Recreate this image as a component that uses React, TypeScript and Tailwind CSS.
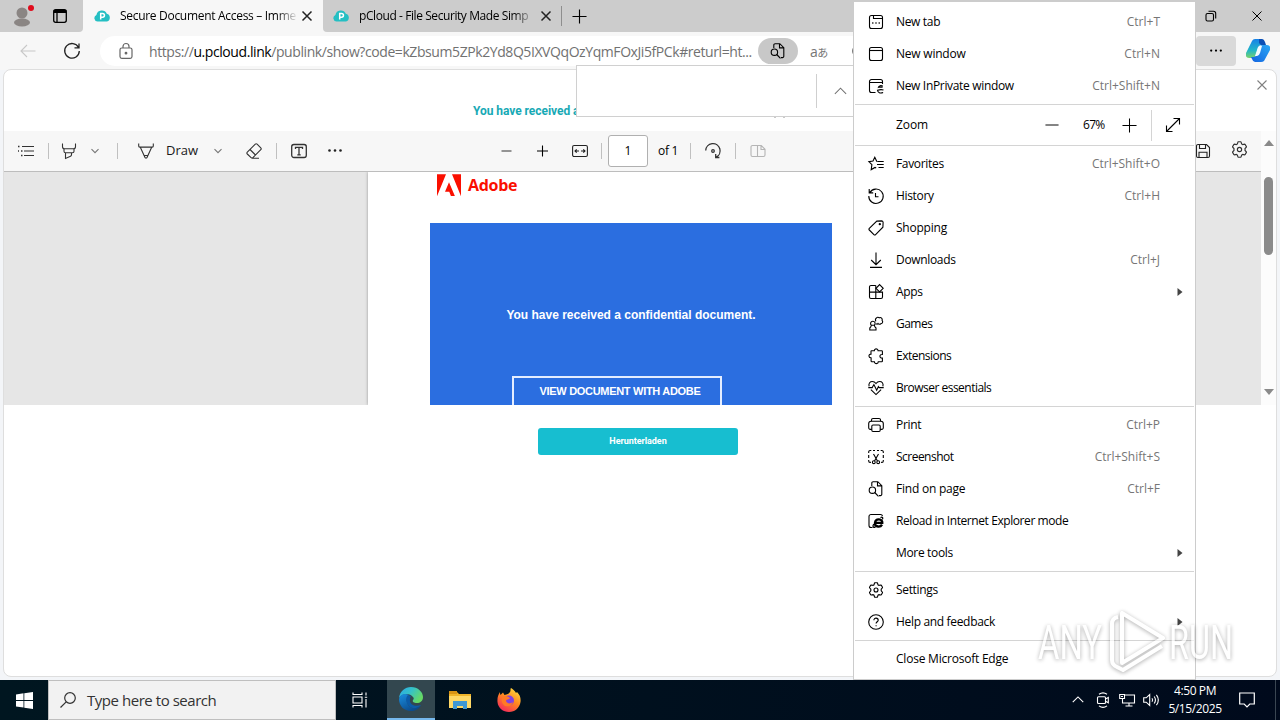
import type { ReactNode } from "react";

const icons: Record<string, ReactNode> = {
  newTab: (
    <>
      <rect x="1.5" y="1.5" width="13" height="13" rx="2" />
      <path d="M5.5 1.5v3h9" />
      <path d="M4.2 9h1.2M7.4 9h1.2M10.6 9h1.2" strokeWidth="1.4" />
    </>
  ),
  newWindow: (
    <>
      <rect x="1.5" y="1.5" width="13" height="13" rx="2" />
      <path d="M1.5 4.5h13" />
    </>
  ),
  inPrivate: (
    <>
      <path d="M7.5 14.5h-4a2 2 0 0 1-2-2v-9a2 2 0 0 1 2-2h9a2 2 0 0 1 2 2v2.5M1.5 4.5h13" />
      <path d="M14.8 8.3c-1.6-1.2-4-.8-4.4 1 1.3-.6 2.4.2 4.2-.1M15.5 12c-2.2-.7-4-.4-6 .2.3 2.4 2.8 3.6 5.6 2.3" />
    </>
  ),
  favorites: (
    <>
      <path d="M9.8 5.5 8.7 5.200 6.800 1.2 5 5 .9 5.6l3 3-.7 5 3.800-2.200 1.200.7" />
      <path d="M10 5.5h5.7M9 8.500h6.700M10.500 11.500h5.200" />
    </>
  ),
  history: (
    <>
      <path d="M1.800 4.600A7.200 7.200 0 1 1 .8 8M1.200 1v3.900h4" />
      <path d="M7.500 5v3.700h3" />
    </>
  ),
  shopping: (
    <>
      <path d="M8.8 1.1 13.6.9a1.5 1.5 0 0 1 1.5 1.5l-.2 4.8L7.6 14.6a1.2 1.2 0 0 1-1.7 0L1.3 10a1.2 1.2 0 0 1 0-1.7Z" />
      <circle cx="11.8" cy="4.2" r=".6" fill="currentColor" />
    </>
  ),
  downloads: <path d="M8 .5v12M3.2 8 8 12.7 12.8 8M2 15.4h12" />,
  apps: (
    <>
      <path d="M7.8 1.5H3a1.5 1.5 0 0 0-1.5 1.5v10A1.5 1.5 0 0 0 3 14.5h10a1.5 1.5 0 0 0 1.5-1.5V8.1h-13M7.8 1.5v13" />
      <path d="m11.6.6 3.6 3.7-3.6 3.6L8 4.3Z" fill="white" />
    </>
  ),
  games: (
    <>
      <path d="M4.8 5.2a2.3 2.3 0 0 1 1.6 4c.1 1.3.6 2 1.6 2.8v2H1.8v-2c1-.8 1.4-1.5 1.5-2.8a2.3 2.3 0 0 1 1.5-4ZM3 9.2h3.6" />
      <path d="M8 5.3a2 2 0 0 1 .2-3 2 2 0 0 1 3.1-.5 2 2 0 0 1 2.8 2.5 2 2 0 0 1-1.2 3.4c-1 .8-2.3.7-2.9-.2-.6.9-1.3.7-2 .3" />
    </>
  ),
  extensions: (
    <path d="M3.500 2.800h2.800c0-2.600 3.800-2.600 3.800 0h3.600a.7.7 0 0 1 .7.700v3c-3.300-.4-3.300 3.900 0 3.600v3a.7.7 0 0 1-.7.700h-3.400c0 2.400-3.900 2.400-3.900 0H3.900a.8.8 0 0 1-.8-.8V9.900C.2 9.600.3 6.100 3 6.100V3.300c0-.3.2-.5.5-.5Z" />
  ),
  essentials: (
    <>
      <path d="M1.1 6.3C.3 3.2 2.2 1.5 4.3 1.5c1.7 0 2.8.8 3.7 2 .9-1.2 2-2 3.7-2 2.1 0 4 1.7 3.2 4.8M2.9 9.6 8 14.6l5.1-5" />
      <path d="M.3 7.6h3.9l1.7-3 2.8 5.6 1.7-3.6.8 1h4.5" />
    </>
  ),
  print: (
    <>
      <path d="M3.8 12.4H2.3A1.6 1.6 0 0 1 .7 10.8V6.6a2.4 2.4 0 0 1 2.4-2.4h9.8a2.4 2.4 0 0 1 2.4 2.4v4.2a1.6 1.6 0 0 1-1.6 1.6h-1.5" />
      <path d="M3.5 4.2V3a1.5 1.5 0 0 1 1.5-1.5h6A1.5 1.5 0 0 1 12.5 3v1.2" />
      <rect x="3.8" y="8" width="8.4" height="6.5" rx="1.2" />
    </>
  ),
  screenshot: (
    <>
      <path d="M.7 4V2.900A1.400 1.400 0 0 1 2.100 1.500H3.300M5 1.500h2M9 1.500h2M12.700 1.500h1.200a1.400 1.400 0 0 1 1.400 1.400V4M15.300 6v3M15.300 11v1a1.400 1.400 0 0 1-1.400 1.400h-.8M.7 6v3M.7 11v1a1.400 1.400 0 0 0 1.400 1.400h.8" />
      <path d="m5.5 5 4 7M10.5 5l-4 7" />
      <circle cx="5.8" cy="13.2" r="1.4" />
      <circle cx="10.2" cy="13.2" r="1.4" />
    </>
  ),
  find: (
    <>
      <path d="M3.8 5V2a1.3 1.3 0 0 1 1.3-1.3h4.7l4 4v8.6a1.3 1.3 0 0 1-1.3 1.3H11M9.5.9v4h4.2" />
      <circle cx="4.4" cy="9.2" r="3.2" />
      <path d="m6.7 11.5 3.8 3.9" />
    </>
  ),
  ie: (
    <>
      <path d="M4.500 14.500H3a2 2 0 0 1-2-2v-9a2 2 0 0 1 2-2h9.500a2 2 0 0 1 2 1.500" />
      <path d="M14 11.600c-.8 1.500-2.300 2.100-4 1.900-2-.2-3.200-1.600-3-3.700.2-2.200 1.700-3.600 4-3.500 2.300.1 3.500 1.700 3.300 3.600H7.500" strokeWidth="2.300" />
      <path d="M12.500 4.600c1.800-.9 2.900-.2 1.900 1.800M5.700 11c-1.300 2.400-.8 4.100 1.800 2.800" strokeWidth="1.300" />
    </>
  ),
  gear: (
    <>
      <path d="m6.5 1.1.3-.4h2.4l.3.4.5 1.700 1 .6 1.800-.4.5.2 1.200 2.100-.1.5L13.200 7.100v1.800l1.200 1.300.1.5-1.200 2.100-.5.2-1.800-.4-1 .6-.5 1.700-.3.4H6.800l-.3-.4L6 13.200l-1-.6-1.800.4-.5-.2-1.200-2.100.1-.5 1.200-1.300V7.100L1.600 5.800l-.1-.5 1.200-2.100.5-.2 1.800.4 1-.6Z" />
      <circle cx="8" cy="8" r="2" />
    </>
  ),
  help: (
    <>
      <circle cx="8" cy="8" r="7.3" />
      <path d="M5.9 6.200c0-2.900 4.300-2.700 4.300 0 0 1.500-2.100 1.700-2.100 3.400M8.100 11.200v1" />
    </>
  ),
  minus: <path d="M.5 8h15" />,
  plus: <path d="M8 .5v15M.5 8h15" />,
  smallMinus: <path d="M3.5 8h10" />,
  smallPlus: <path d="M8.500 2.500v11M3 8h11" />,
  expand: <path d="M1.5 14.5 14.5 1.5M8.5 1.5h6v6M1.5 8.5v6h6" />,
  close: <path d="m3.5 3.500 9 9M12.500 3.500l-9 9" />,
  up: <path d="m2 10.500 6-6 6 6" />,
  down: <path d="m4.500 6.200 3.500 3.500 3.500-3.500" />,
  restore: (
    <>
      <rect x="3" y="5.5" width="7.5" height="7.5" rx="1.5" />
      <path d="M5.5 3.3h5a2.200 2.200 0 0 1 2.200 2.200v5" />
    </>
  ),
  dots: (
    <g fill="currentColor" stroke="none">
      <circle cx="2.500" cy="7.500" r="1.300" />
      <circle cx="8" cy="7.500" r="1.300" />
      <circle cx="13.500" cy="7.500" r="1.300" />
    </g>
  ),
  back: <path d="M15.5 8H1M7 2 1 8l6 6" />,
  reload: <path d="M14.5 4.5A7.300 7.300 0 1 0 15.300 8M15 .5v4.300h-4.500" />,
  lock: (
    <>
      <rect x="2" y="5" width="12" height="10.3" rx="1.8" />
      <path d="M5 5V3.500a3 3 0 0 1 6 0V5" />
      <circle cx="8" cy="10.2" r=".8" fill="currentColor" />
    </>
  ),
  tabs: (
    <>
      <rect x="1.7" y="1.7" width="12.6" height="12.6" rx="2" />
      <path d="M1.7 3.5h12.6" strokeWidth="3" />
      <path d="M5 3v11" />
    </>
  ),
  list: (
    <>
      <path d="M4 3.5h12M6 8h10M6 12.5h10" />
      <path d="M0 3.500h1.500M3 8h1.500M3 12.500h1.500M0 8h1" strokeWidth="1.5" />
    </>
  ),
  highlighter: <path d="M1.500.5v3.200a2 2 0 0 0 2 2h9a2 2 0 0 0 2-2V.5M3 5.700v2.500a1.500 1.500 0 0 0 1.500 1.500h7A1.500 1.500 0 0 0 13 8.200V5.700M4.500 9.700v5.800l5-2.300a1.500 1.500 0 0 0 1-1.400V9.700" />,
  pen: <path d="M.7.5v2.600a1 1 0 0 0 1 1h12.600a1 1 0 0 0 1-1V.5M2.200 4.100l4.800 10.300a1.100 1.100 0 0 0 2 0l4.800-10.300M6 12.500h4" />,
  eraser: <path d="m1.300 9.200 8-8a1.300 1.300 0 0 1 1.800 0l3.700 3.700a1.300 1.300 0 0 1 0 1.800l-7.900 7.900a1.300 1.300 0 0 1-1.800 0L1.300 11a1.300 1.300 0 0 1 0-1.800ZM4 6.500l5.500 5.500M6 15.300h7" />,
  text: (
    <>
      <rect x=".7" y="1.500" width="14.6" height="13" rx="2.2" />
      <path d="M4.500 6V4.300h7V6M8 4.300v7.500M6.300 11.800h3.400" />
    </>
  ),
  fit: (
    <>
      <rect x=".6" y="2.500" width="14.800" height="11" rx="1.500" />
      <path d="M7 8H3M4.700 6.300 3 8l1.700 1.700M9 8h4M11.300 6.300 13 8l-1.700 1.700" />
    </>
  ),
  rotate: (
    <>
      <path d="M.7 7.500A7.200 7.200 0 1 1 11 14.300M10.700 10.900v3.600h3.700" />
      <circle cx="8" cy="8" r="1.300" />
    </>
  ),
  pageView: <path d="M7.500 13.500h-5a1.500 1.500 0 0 1-1.500-1.500V4a1.500 1.500 0 0 1 1.500-1.500h5ZM7.500 2.500h3.800L15 6.300V12a1.500 1.500 0 0 1-1.500 1.500h-6M11 2.700v3.800h4" />,
  save: <path d="M3 1.500h8.500l3 3V13a1.500 1.500 0 0 1-1.500 1.500H3A1.500 1.500 0 0 1 1.500 13V3A1.500 1.500 0 0 1 3 1.500ZM4.500 1.700v3.800h6V1.700M4 14.400V9.300h8v5.100" />,
  search: (
    <>
      <circle cx="10" cy="6" r="5.300" />
      <path d="M6.200 9.800.5 15.500" />
    </>
  ),
  taskView: <path d="M1 .5v2h9v-2M1 15.500v-2h9v2M1 5h9v6H1ZM14 .5v3M14 7v8.500M12.800 5.200h2.400" />,
  camera: (
    <>
      <rect x="2.500" y="4.800" width="8" height="6.700" rx="1" />
      <path d="m10.500 7 2.800-1.500v5.300L10.500 9.300M4 2.300c2.500-1.800 5.500-1.800 8 0M4 13.900c2.500 1.800 5.500 1.800 8 0" />
    </>
  ),
  network: <path d="M5.500 3h10v8H3.500V6.500M.7 2.500h4.800v4H.7ZM2 4.500h2M10 11v3M6.500 14h7" />,
  sound: <path d="M.7 5.800h2.500l3.500-3.200v10.800l-3.500-3.200H.7ZM9 6.200c.8 1.100.8 2.500 0 3.600M11.200 4.500c1.500 2.100 1.500 4.900 0 7M13.400 2.800c2.300 3.100 2.300 7.300 0 10.400" />,
  notice: <path d="M.7 1h14.600v11h-4.500L8 14.800 5.200 12H.7Z" />,
};

function Icon({ name, className = "size-4", width = 1.1 }: { name: string; className?: string; width?: number }) {
  return (
    <svg viewBox="0 0 16 16" fill="none" stroke="currentColor" strokeWidth={width} className={`shrink-0 overflow-visible ${className}`}>
      {icons[name]}
    </svg>
  );
}

function PCloud() {
  return (
    <svg viewBox="0 0 16 12" className="h-3 w-4 shrink-0">
      <path d="M3.5 11.500A3.400 3.400 0 0 1 2.400 5 5.500 5.500 0 0 1 12.800 3.800a4 4 0 0 1 .2 7.700Z" fill="#25bfc3" />
      <path d="M6.700 9.500V3.500h1.900a1.800 1.800 0 0 1 0 3.700H6.700" fill="none" stroke="white" strokeWidth="1.500" />
    </svg>
  );
}

type Item = { label: string; icon?: string; keys?: string; sub?: boolean; tracking?: string };

const loose = "tracking-[-0.22px]";
const tight = "tracking-[-0.52px]";

const topItems: Item[] = [
  { label: "New tab", icon: "newTab", keys: "Ctrl+T" },
  { label: "New window", icon: "newWindow", keys: "Ctrl+N", tracking: loose },
  { label: "New InPrivate window", icon: "inPrivate", keys: "Ctrl+Shift+N" },
];

const groups: Item[][] = [
  [
    { label: "Favorites", icon: "favorites", keys: "Ctrl+Shift+O" },
    { label: "History", icon: "history", keys: "Ctrl+H" },
    { label: "Shopping", icon: "shopping", tracking: loose },
    { label: "Downloads", icon: "downloads", keys: "Ctrl+J" },
    { label: "Apps", icon: "apps", sub: true },
    { label: "Games", icon: "games", tracking: tight },
    { label: "Extensions", icon: "extensions", tracking: tight },
    { label: "Browser essentials", icon: "essentials", tracking: tight },
  ],
  [
    { label: "Print", icon: "print", keys: "Ctrl+P" },
    { label: "Screenshot", icon: "screenshot", keys: "Ctrl+Shift+S", tracking: tight },
    { label: "Find on page", icon: "find", keys: "Ctrl+F", tracking: loose },
    { label: "Reload in Internet Explorer mode", icon: "ie", tracking: "tracking-[-0.42px]" },
    { label: "More tools", sub: true },
  ],
  [
    { label: "Settings", icon: "gear" },
    { label: "Help and feedback", icon: "help", sub: true },
  ],
  [{ label: "Close Microsoft Edge", tracking: loose }],
];

function MenuRow({ item }: { item: Item }) {
  return (
    <div className="flex h-8 items-center pl-3.5 pr-3">
      <span className="flex w-4">{item.icon && <Icon name={item.icon} />}</span>
      <span className={`ml-3 flex-1 ${item.tracking ?? "tracking-[-0.33px]"}`}>{item.label}</span>
      {item.keys && <span className="mr-[23px] text-[#767676]">{item.keys}</span>}
      {item.sub && (
        <svg viewBox="0 0 6 8" className="h-2 w-[6px]">
          <path d="M.5 0v8L5.500 4Z" fill="#444" />
        </svg>
      )}
    </div>
  );
}

const Rule = () => <div className="mx-px my-[2px] h-px bg-[#d4d4d4]" />;

function BrowserMenu() {
  return (
    <div className="absolute left-[853px] top-px w-[343px] border border-[#cccccc] bg-white py-1 text-[12px] text-black">
      {topItems.map((item) => (
        <MenuRow key={item.label} item={item} />
      ))}
      <Rule />
      <div className="flex h-9 items-center pl-[42px]">
        <span className="w-[149px] tracking-[-0.1px]">Zoom</span>
        <Icon name="minus" className="size-[14px]" />
        <span className="ml-[24px] w-[24px] whitespace-nowrap tracking-[-0.7px]">67%</span>
        <Icon name="plus" className="ml-[15px] size-[15px]" />
        <span className="ml-[14px] h-[31px] w-px bg-[#d4d4d4]" />
        <Icon name="expand" className="ml-[13px] size-4" />
      </div>
      {groups.map((group, i) => (
        <div key={i}>
          <Rule />
          {group.map((item) => (
            <MenuRow key={item.label} item={item} />
          ))}
        </div>
      ))}
    </div>
  );
}

function TabStrip() {
  return (
    <div className="flex h-8 bg-[#f7f7f7]">
      <div className="flex w-[83px] items-center rounded-br bg-[#cccccc]">
        <svg viewBox="0 0 22 22" className="ml-[13px] size-[22px]">
          <circle cx="9" cy="8" r="5.5" fill="#8a8583" />
          <ellipse cx="9" cy="17.500" rx="8" ry="4" fill="#8a8583" />
          <circle cx="18" cy="3" r="3" fill="#e00b1c" />
        </svg>
        <Icon name="tabs" className="ml-[17px] size-4 text-black" width={1.3} />
      </div>
      <div className="flex w-[240px] items-center bg-[#f7f7f7] pl-[11px]">
        <PCloud />
        <span className="ml-[10px] w-[178px] whitespace-nowrap text-[12px] tracking-[-0.3px] text-black mask-r-from-88%">
          Secure Document Access – Imme
        </span>
        <Icon name="close" className="ml-px size-4 text-[#222]" width={1.5} />
      </div>
      <div className="flex flex-1 items-center rounded-bl bg-[#cccccc] pl-[10px]">
        <PCloud />
        <span className="ml-[10px] w-[176px] whitespace-nowrap text-[12px] tracking-[-0.42px] text-black mask-r-from-88%">
          pCloud - File Security Made Simp
        </span>
        <Icon name="close" className="ml-[3px] size-4 text-[#222]" width={1.5} />
        <span className="ml-[7px] h-5 w-px bg-[#8e8e8e]" />
        <Icon name="plus" className="ml-[10px] size-[15px] text-black" width={1.2} />
        <Icon name="restore" className="ml-[616px] size-4 text-black" />
        <Icon name="close" className="ml-[30px] size-4 text-black" width={1} />
      </div>
    </div>
  );
}

function AddressRow() {
  return (
    <div className="flex h-[38px] bg-[#f7f7f7] pt-1">
      <Icon name="back" className="ml-5 mt-[7px] size-4 text-[#c8c8c8]" />
      <Icon name="reload" className="ml-7 mt-[7px] size-4 text-[#222]" width={1.3} />
      <div className="ml-5 flex h-[30px] w-[1090px] items-center rounded-full bg-white pl-[18px]">
        <Icon name="lock" className="size-4 text-[#666]" width={1.2} />
        <span className="ml-[15px] w-[609px] whitespace-nowrap text-[14px] tracking-[-0.42px] text-[#717171]">
          https://<span className="text-black">u.pcloud.link</span>
          /publink/show?code=kZbsum5ZPk2Yd8Q5IXVQqOzYqmFOxJi5fPCk#returl=ht...
        </span>
        <span className="flex h-[26px] w-10 shrink-0 items-center justify-center rounded-full bg-[#c8c8c8]">
          <Icon name="find" className="size-4 text-black" />
        </span>
        <span className="ml-3 whitespace-nowrap font-['Open_Sans','Noto_Sans_CJK_JP',sans-serif] text-[14px] tracking-[-0.5px] text-[#767676]">
          a<span className="text-[11px]">あ</span>
        </span>
        <span className="ml-[24px] size-3 shrink-0 rounded-full border border-[#767676]" />
      </div>
      <div className="ml-1.5 flex h-[30px] w-10 items-center justify-center rounded bg-[#d9d9d9]">
        <Icon name="dots" className="size-[14px] text-black" />
      </div>
      <svg viewBox="0 0 24 24" className="ml-[10px] mt-[3px] size-6">
        <defs>
          <linearGradient id="copA" x1="0" y1="0" x2="0" y2="1">
            <stop offset="0" stopColor="#1681e8" />
            <stop offset="0.6" stopColor="#22b7c8" />
            <stop offset="1" stopColor="#7ad36a" />
          </linearGradient>
          <linearGradient id="copB" x1="0" y1="1" x2="1" y2="0">
            <stop offset="0" stopColor="#1464e0" />
            <stop offset="1" stopColor="#2aa7f5" />
          </linearGradient>
        </defs>
        <path d="M6 2Q7 0 9 0h6q2 0 3 3l1 3h-4q-2 0-3 3l-2 7q-1 3-4 3H3q-4 0-3-5Z" fill="url(#copA)" />
        <path d="M13 0h3q2 0 3 3l1 3h-5l-2-2Z" fill="#0c4fb5" />
        <path d="M18 22q-1 1-3 1H9q-2 0-3-3l-1-2h3q2 0 3-3l2-6q1-3 4-3h4q4 0 3 5Z" fill="url(#copB)" />
        <path d="m12 8-3 9h2q2 0 3-3l2-7h-2q-1 0-2 1Z" fill="#f3fbff" />
      </svg>
    </div>
  );
}

const Split = ({ className }: { className: string }) => <span className={`h-4 w-px bg-[#c0c0c0] ${className}`} />;

function PdfToolbar() {
  return (
    <div className="flex h-[41px] items-center border-b border-[#bdbdbd] bg-[#f7f7f7] pb-px text-[12px] text-[#333]">
      <Icon name="list" className="ml-[14px] size-4" />
      <Split className="ml-[14px]" />
      <Icon name="highlighter" className="ml-3 size-4" />
      <Icon name="down" className="ml-[10px] size-4 text-[#777]" />
      <Split className="ml-[14px]" />
      <Icon name="pen" className="ml-5 size-4" />
      <span className="ml-3 w-[33px] text-[13px] text-[#1a1a1a]">Draw</span>
      <Icon name="down" className="ml-[11px] size-4 text-[#777]" />
      <Icon name="eraser" className="ml-5 size-4" />
      <Split className="ml-[14px]" />
      <Icon name="text" className="ml-[14px] size-4" width={1.3} />
      <Icon name="dots" className="ml-5 size-4 text-[#222]" />
      <Icon name="smallMinus" className="ml-[155px] size-4" />
      <Icon name="smallPlus" className="ml-5 size-4 text-black" />
      <Icon name="fit" className="ml-[22px] size-4 text-[#222]" />
      <Split className="ml-[13px]" />
      <span className="ml-1.5 flex h-8 w-10 items-center justify-center rounded-[3px] border border-[#b0b0b0] bg-white text-black">
        1
      </span>
      <span className="ml-[10px] w-5 whitespace-nowrap tracking-[-0.3px] text-black">of 1</span>
      <Split className="ml-3" />
      <Icon name="rotate" className="ml-[14px] size-4" width={1.3} />
      <Split className="ml-[14px]" />
      <Icon name="pageView" className="ml-[14px] size-4 text-[#b5b5b5]" />
      <Icon name="save" className="ml-[429px] size-4 text-[#222]" />
      <Icon name="gear" className="-mt-0.5 ml-5 size-[17px]" width={1.1} />
    </div>
  );
}

function PdfViewer() {
  return (
    <div className="flex h-[274px]">
      <div className="flex w-[1257px] flex-col">
        <PdfToolbar />
        <div className="flex flex-1 overflow-hidden bg-[#e6e6e6] pl-[364px]">
          <div className="w-[526px] bg-white pl-[62px] pt-[2px] shadow-[0_0_3px_rgba(0,0,0,0.35)]">
            <div className="flex h-[22px] items-center pl-[7px]">
              <svg viewBox="0 0 24 22" className="h-[22px] w-6">
                <path d="M0 0h9L0 22ZM15 0h9v22ZM12 8l6 14h-4l-1.7-4.500H8Z" fill="#fa0f00" transform="translate(0 .3)" />
              </svg>
              <span className="ml-[7px] font-['Open_Sans',sans-serif] text-[16px] font-bold tracking-[-0.3px] text-[#fa0f00]">Adobe</span>
            </div>
            <div className="mt-[27px] flex h-[200px] w-[402px] flex-col items-center bg-[#2b6ee0] font-['Liberation_Sans',sans-serif] font-bold text-white">
              <p className="mt-[84px] h-4 whitespace-nowrap text-[12px] leading-4">
                You have received a confidential document.
              </p>
              <div className="mr-7 mt-[53px] w-[210px] shrink-0 whitespace-nowrap border-2 border-[#e4edff] pb-4 pl-[6px] pt-[5px] text-center text-[11px] leading-4 tracking-[-0.3px]">
                VIEW DOCUMENT WITH ADOBE
              </div>
            </div>
          </div>
        </div>
      </div>
      <div className="flex flex-1 flex-col items-center bg-[#fcfcfc]">
        <svg viewBox="0 0 10 6" className="mt-[9px] h-[6px] w-[10px]">
          <path d="M5 0 10 6H0Z" fill="#8a8a8a" />
        </svg>
        <span className="mt-[31px] h-[78px] w-[9px] rounded-full bg-[#8b8b8b]" />
        <svg viewBox="0 0 10 6" className="mt-[134px] h-[6px] w-[10px]">
          <path d="M5 6 10 0H0Z" fill="#8a8a8a" />
        </svg>
      </div>
    </div>
  );
}

function Taskbar() {
  return (
    <div className="flex h-10 items-center bg-linear-to-r from-[#001620] to-[#000a1c] text-white">
      <svg viewBox="0 0 17 17" className="ml-4 size-[17px]">
        <path d="M0 2.400 7.500 1.300V8H0ZM8.300 1.200 17 0v8H8.300ZM0 8.900h7.500v6.700L0 14.500ZM8.300 8.900H17V17l-8.700-1.300Z" fill="white" />
      </svg>
      <div className="ml-[15px] flex h-10 w-[288px] items-center border border-[#bfbfbf] bg-[#f2f2f2] pl-[11px] text-[#333]">
        <Icon name="search" className="size-4" width={1.2} />
        <span className="ml-[11px] whitespace-nowrap text-[15px] tracking-[-0.46px]">Type here to search</span>
      </div>
      <Icon name="taskView" className="ml-4 size-4" />
      <div className="ml-[19px] flex h-10 w-12 items-center justify-center border-b-2 border-[#76b9ed] bg-[#33474f]">
        <svg viewBox="0 0 24 24" className="size-6">
          <defs>
            <linearGradient id="edgeTop" x1="0" y1="0" x2="1" y2="0.5">
              <stop offset="0" stopColor="#2aa8e8" />
              <stop offset="0.5" stopColor="#35c1c9" />
              <stop offset="1" stopColor="#66d965" />
            </linearGradient>
            <linearGradient id="edgeLow" x1="0" y1="0" x2="0.6" y2="1">
              <stop offset="0" stopColor="#1a8ee0" />
              <stop offset="1" stopColor="#0b4a8c" />
            </linearGradient>
          </defs>
          <path d="M0 11C1 4 6 0 12 0c7 0 12 5 12 10 0 4-3 6-6 6-3 0-5-1-4-3 1-1 1-2 0-3-3-4-11-4-14 1Z" fill="url(#edgeTop)" />
          <path d="M0 12c1-5 6-6 10-4-3 2-3 8 0 11 3 3 8 3 12-1-2 4-6 6-10 6C5 24 0 19 0 12Z" fill="url(#edgeLow)" />
          <path d="M9 8c-3 3-2 8 1 11 3 3 8 3 12-1-6 2-12 0-11-6 0-2 1-3 1-3Z" fill="#0c5ba8" />
        </svg>
      </div>
      <svg viewBox="0 0 22 20" className="ml-[14px] h-5 w-[22px]">
        <path d="M0 2h8l2 2h12v14H0Z" fill="#f0b429" />
        <path d="M0 6h22v12H0Z" fill="#ffd866" />
        <path d="M4 19v-8h14v8h-4v-3H8v3Z" fill="#3f97d3" />
        <path d="M0 1h8v3H0Z" fill="#d99414" />
      </svg>
      <svg viewBox="0 0 24 24" className="ml-[26px] size-6">
        <defs>
          <linearGradient id="fox" x1="0.8" y1="0" x2="0.2" y2="1">
            <stop offset="0" stopColor="#ffdd3f" />
            <stop offset="0.45" stopColor="#ff8a1f" />
            <stop offset="1" stopColor="#f4235f" />
          </linearGradient>
        </defs>
        <path d="M3 4c0 1 0 2 .5 3L6 4.500 7.500 7C10 6 12 6 13 4s0-3 1-4c2 1 4 3 5 5l1-1c3 3 4 6 3.500 10C22.500 20 18 24 12 24S1 20 .5 14C.2 10 1 7 3 4Z" fill="url(#fox)" />
        <circle cx="12" cy="12.500" r="5" fill="#8142e0" />
        <path d="M5 9c3-2 6-1 8 1-1 2-4 1-4 3 1 3 5 3 7 1-1 4-5 5-8 4-3-2-4-5-3-9Z" fill="#ff7a25" />
      </svg>
      <Icon name="up" className="ml-[550px] mr-2.5 size-[14px]" width={1.300} />
      <Icon name="camera" className="size-4" />
      <Icon name="network" className="ml-2 size-4" />
      <Icon name="sound" className="ml-2 size-4" />
      <div className="ml-2 w-14 text-center text-[12px] leading-[18px] tracking-[-0.4px]">
        <p className="whitespace-nowrap">4:50 PM</p>
        <p className="whitespace-nowrap">5/15/2025</p>
      </div>
      <Icon name="notice" className="ml-4 size-4" width={1.2} />
      <span className="ml-5 h-10 w-px bg-[#3a4652]" />
    </div>
  );
}

function Watermark() {
  return (
    <svg
      viewBox="0 0 200 66"
      className="absolute left-[1036px] top-[608px] h-[66px] w-[200px] overflow-visible font-['Roboto',sans-serif] opacity-65 drop-shadow-[0_1px_2px_rgba(0,0,0,0.5)]"
    >
      <g fill="white" fontSize="48">
        <text x="2" y="51" textLength="64" lengthAdjust="spacingAndGlyphs">ANY</text>
        <text x="133" y="51" textLength="64" lengthAdjust="spacingAndGlyphs">RUN</text>
      </g>
      <path d="M86 5v50l41-25ZM82 9q-6 1-6 7v36q0 5 5 7l6 3 39-24" fill="none" stroke="white" strokeWidth="4" strokeLinejoin="round" />
    </svg>
  );
}

export default function App() {
  return (
    <div className="relative h-[720px] w-[1280px] overflow-hidden bg-[#f3f5f8] font-['Open_Sans','Noto_Sans',sans-serif]">
      <TabStrip />
      <AddressRow />
      <div className="mx-[3px] -mt-px mb-[3px] h-[608px] overflow-hidden rounded-lg border border-[#dedede] bg-white">
        <div className="flex h-[61px]">
          <p className="ml-[469px] mt-[33px] h-4 w-[781px] whitespace-nowrap font-['Roboto',sans-serif] text-[12px] font-bold leading-4 tracking-[-0.05px] text-[#17a9b5]">
            You have received a
          </p>
          <Icon name="close" className="mt-[7px] size-4 text-[#808080]" />
        </div>
        <PdfViewer />
        <div className="ml-[534px] mt-[23px] flex h-[27px] w-[200px] items-center justify-center rounded-[3px] bg-[#17bed0] font-['Roboto',sans-serif] text-[9px] font-bold tracking-[-0.05px] text-white">
          Herunterladen
        </div>
      </div>
      <Taskbar />

      <div className="absolute left-[576px] top-[65px] flex h-[52px] w-[290px] items-center border border-[#d0d0d0] bg-white pl-[239px]">
        <span className="h-[34px] w-px bg-[#cfcfcf]" />
        <Icon name="up" className="ml-4 size-[15px] text-[#707070]" />
        <span className="absolute -bottom-[2px] left-[197px] h-px w-[11px] border-x-2 border-[#c9c9c9]" />
      </div>
      <BrowserMenu />
      <Watermark />
    </div>
  );
}
